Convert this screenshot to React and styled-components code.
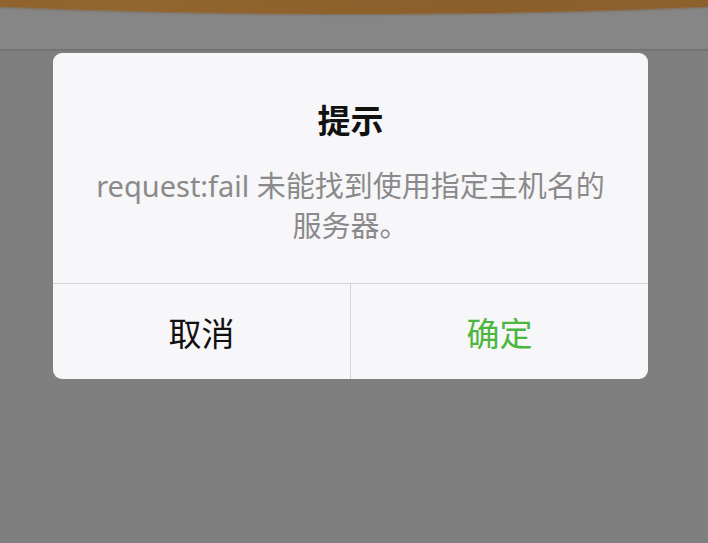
import React from "react";
import styled, { createGlobalStyle } from "styled-components";

const Global = createGlobalStyle`
  html, body { margin: 0; padding: 0; background: #7f7f7f; }
  body { font-family: "Noto Sans", "Noto Sans CJK SC", sans-serif; }
  #root { min-height: 543px; }
`;

const Page = styled.div`
  width: 708px;
  height: 543px;
  overflow: hidden;
  background: #7f7f7f;
  display: flex;
  flex-direction: column;
`;

const NavBar = styled.div`
  position: relative;
  height: 49px;
  flex: none;
  background: #868686;
  border-bottom: 2px solid #737373;
  overflow: hidden;
  &::before {
    content: "";
    position: absolute;
    left: -246px;
    top: -62px;
    width: 1200px;
    height: 76px;
    border-radius: 50%;
    background: linear-gradient(90deg, #8a5a26, #93662f 30%, #8c5e2a 60%, #8f6230);
    box-shadow: 0 1px 2px rgba(120, 90, 50, 0.6);
  }
`;

const Dialog = styled.div`
  margin: 2px 0 0 53px;
  width: 595px;
  background: #f7f6f9;
  border-radius: 9px;
  overflow: hidden;
  display: flex;
  flex-direction: column;
`;

const Body = styled.div`
  padding: 48px 20px 37px;
  display: flex;
  flex-direction: column;
  align-items: center;
  gap: 25px;
`;

const Title = styled.div`
  font-size: 33px;
  line-height: 40px;
  font-weight: 700;
  color: #111;
`;

const Message = styled.div`
  font-size: 29px;
  line-height: 40px;
  color: #8a8a8a;
  text-align: center;
  width: 530px;
`;

const Actions = styled.div`
  display: grid;
  grid-template-columns: 297px 1fr;
  border-top: 1px solid #d5d4d8;
  height: 95px;
`;

const Action = styled.div`
  display: flex;
  align-items: center;
  justify-content: center;
  font-size: 33px;
  color: ${(p) => (p.$primary ? "#4bb640" : "#111")};
  & + & {
    border-left: 1px solid #d5d4d8;
  }
`;

export default function App() {
  return (
    <Page>
      <Global />
      <NavBar />
      <Dialog>
        <Body>
          <Title>提示</Title>
          <Message>request:fail 未能找到使用指定主机名的服务器。</Message>
        </Body>
        <Actions>
          <Action>取消</Action>
          <Action $primary>确定</Action>
        </Actions>
      </Dialog>
    </Page>
  );
}
